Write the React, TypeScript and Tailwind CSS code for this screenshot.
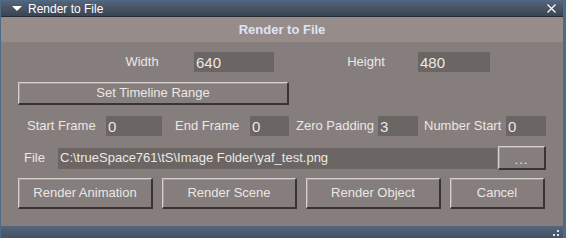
import React from "react";

const font = { fontFamily: '"Liberation Sans", Arial, sans-serif' };

function Bevel({ className, children }: { className: string; children?: React.ReactNode }) {
  return (
    <div
      className={`flex items-center justify-center border-t border-l border-t-[#d6d0ce] border-l-[#d6d0ce] border-b-2 border-r-2 border-b-[#3a3535] border-r-[#3a3535] bg-[#857e7c] text-[13px] text-[#ebe7e5] shadow-[inset_1px_1px_0_#a29b99] ${className}`}
    >
      {children}
    </div>
  );
}

function Field({ className, value }: { className: string; value: string }) {
  return (
    <div className={`flex items-center bg-[#6b6563] pl-[2px] text-[15px] leading-none text-[#ece9e7] ${className}`}>
      {value}
    </div>
  );
}

export default function App() {
  return (
    <div className="h-[238px] w-[566px] overflow-hidden bg-[#4d6a86] pl-px pt-px" style={font}>
      <div className="flex h-[237px] w-[562px] flex-col">
        {/* title bar */}
        <div className="flex h-[16px] items-center border-b border-[#262b33] bg-gradient-to-b from-[#566376] to-[#3a4452] text-white">
          <svg width="10" height="6" viewBox="0 0 10 6" className="ml-[11px]">
            <path d="M0 0H10L5 5Z" fill="#ffffff" />
          </svg>
          <span className="ml-[6px] text-[12px] leading-none">Render to File</span>
          <svg width="9" height="9" viewBox="0 0 9 9" className="ml-auto mr-[7px]">
            <path d="M0.5 0.5L8.5 8.5M8.5 0.5L0.5 8.5" stroke="#ffffff" strokeWidth="1.2" />
          </svg>
        </div>

        {/* header band */}
        <div className="flex h-[25px] items-center justify-center bg-[#968d8b] text-[13px] font-bold text-[#dde4f4]">
          Render to File
        </div>

        {/* body */}
        <div className="flex h-[184px] flex-col bg-[#857e7c] pt-[10px] text-[13px] text-[#ebe7e5]">
          <div className="flex items-center">
            <div className="ml-[107px] w-[68px] text-center">Width</div>
            <Field className="ml-[18px] h-[20px] w-[80px]" value="640" />
            <div className="ml-[56px] w-[72px] text-center">Height</div>
            <Field className="ml-[16px] h-[20px] w-[72px]" value="480" />
          </div>

          <Bevel className="ml-[17px] mt-[10px] h-[23px] w-[271px]">Set Timeline Range</Bevel>

          <div className="mt-[11px] flex items-center">
            <div className="ml-[26px] w-[79px]">Start Frame</div>
            <Field className="h-[20px] w-[56px]" value="0" />
            <div className="ml-[13px] w-[75px]">End Frame</div>
            <Field className="h-[20px] w-[39px]" value="0" />
            <div className="ml-[7px] w-[82px]">Zero Padding</div>
            <Field className="h-[20px] w-[40px]" value="3" />
            <div className="ml-[6px] w-[82px]">Number Start</div>
            <Field className="h-[20px] w-[40px]" value="0" />
          </div>

          <div className="mt-[10px] flex items-center">
            <div className="ml-[23px] w-[34px]">File</div>
            <div className="flex h-[21px] w-[439px] items-center bg-[#6b6563] pl-[2px] text-[13px] text-[#ece9e7]">
              C:\trueSpace761\tS\Image Folder\yaf_test.png
            </div>
            <Bevel className="ml-px h-[24px] w-[48px] pt-[4px] tracking-[1px]">...</Bevel>
          </div>

          <div className="ml-[17px] mt-[8px] flex gap-[9px]">
            <Bevel className="h-[31px] w-[135px]">Render Animation</Bevel>
            <Bevel className="h-[31px] w-[135px]">Render Scene</Bevel>
            <Bevel className="h-[31px] w-[135px]">Render Object</Bevel>
            <Bevel className="h-[31px] w-[95px]">Cancel</Bevel>
          </div>
        </div>

        {/* bottom frame */}
        <div className="flex h-[12px] items-end justify-end bg-gradient-to-b from-[#56657a] to-[#43526a] pb-[1px] pr-[3px]">
          <svg width="7" height="7" viewBox="0 0 7 7">
            <rect x="4" y="0" width="2" height="2" fill="#dfe3ea" />
            <rect x="0" y="4" width="2" height="2" fill="#dfe3ea" />
            <rect x="4" y="4" width="2" height="2" fill="#dfe3ea" />
          </svg>
        </div>
      </div>
    </div>
  );
}
